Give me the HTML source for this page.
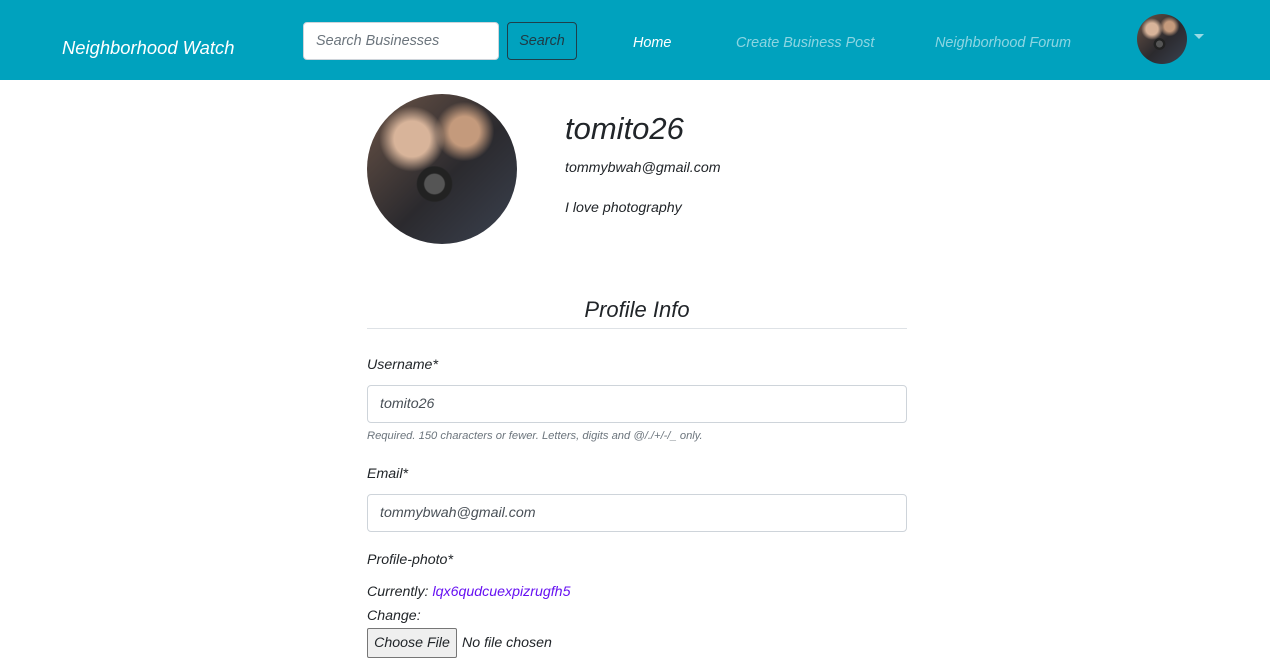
<!DOCTYPE html>
<html><head><style>
*{margin:0;padding:0;box-sizing:border-box}
body{width:1270px;height:667px;overflow:hidden;background:#fff;font-family:"Liberation Sans",sans-serif;font-style:italic;color:#212529;position:relative}
.a{position:absolute;white-space:nowrap}
nav{position:absolute;left:0;top:0;width:1270px;height:80px;background:#00a2be}
.photo{border-radius:50%;background:radial-gradient(circle at 45% 60%,#555 0 8%,#222 9% 14%,transparent 15%),radial-gradient(circle at 30% 30%,#d8b49a 0 12%,transparent 22%),radial-gradient(circle at 65% 25%,#c49a7c 0 10%,transparent 20%),linear-gradient(135deg,#6b5447,#2b2a2e 55%,#3b4250)}
.inp{position:absolute;border:1px solid #ced4da;border-radius:4px;background:#fff;font-size:15px;color:#495057;padding:0 12px;display:flex;align-items:center}
</style></head><body>
<nav>
<div class="a" style="left:62px;top:37px;font-size:18.4px;color:#fff">Neighborhood Watch</div>
<div class="inp" style="left:303px;top:22px;width:196px;height:38px;color:#6c757d;font-size:14.4px">Search Businesses</div>
<div class="a" style="left:507px;top:22px;width:70px;height:38px;border:1px solid #1f3f4a;border-radius:4px;font-size:14.4px;color:#1f3a44;display:flex;align-items:center;justify-content:center">Search</div>
<div class="a" style="left:633px;top:35px;font-size:14.4px;color:#fff">Home</div>
<div class="a" style="left:736px;top:35px;font-size:14.4px;color:rgba(255,255,255,.55)">Create Business Post</div>
<div class="a" style="left:935px;top:35px;font-size:14.4px;color:rgba(255,255,255,.55)">Neighborhood Forum</div>
<div class="a photo" style="left:1137px;top:14px;width:50px;height:50px"></div>
<div class="a" style="left:1194px;top:34px;width:0;height:0;border-left:5px solid transparent;border-right:5px solid transparent;border-top:5px solid rgba(255,255,255,.6)"></div>
</nav>
<div class="a photo" style="left:367px;top:94px;width:150px;height:150px"></div>
<div class="a" style="left:565px;top:111px;font-size:31px">tomito26</div>
<div class="a" style="left:565px;top:160px;font-size:14.2px">tommybwah@gmail.com</div>
<div class="a" style="left:565px;top:200px;font-size:14.2px">I love photography</div>
<div class="a" style="left:367px;top:297px;width:540px;text-align:center;font-size:22px">Profile Info</div>
<div class="a" style="left:367px;top:328px;width:540px;border-top:1px solid #dee2e6"></div>
<div class="a" style="left:367px;top:357px;font-size:14.2px">Username*</div>
<div class="inp" style="left:367px;top:385px;width:540px;height:38px;font-size:14.2px">tomito26</div>
<div class="a" style="left:367px;top:430px;font-size:11.2px;color:#6c757d">Required. 150 characters or fewer. Letters, digits and @/./+/-/_ only.</div>
<div class="a" style="left:367px;top:466px;font-size:14.2px">Email*</div>
<div class="inp" style="left:367px;top:494px;width:540px;height:38px;font-size:14.2px">tommybwah@gmail.com</div>
<div class="a" style="left:367px;top:552px;font-size:14.2px">Profile-photo*</div>
<div class="a" style="left:367px;top:584px;font-size:14.2px">Currently: <span style="color:#6610f2">lqx6qudcuexpizrugfh5</span></div>
<div class="a" style="left:367px;top:608px;font-size:14.2px">Change:</div>
<div class="a" style="left:367px;top:628px;width:90px;height:30px;border:1px solid #767676;border-radius:2px;background:#efefef;font-size:14.2px;display:flex;align-items:center;justify-content:center">Choose File</div>
<div class="a" style="left:462px;top:635px;font-size:14.2px">No file chosen</div>
</body></html>
